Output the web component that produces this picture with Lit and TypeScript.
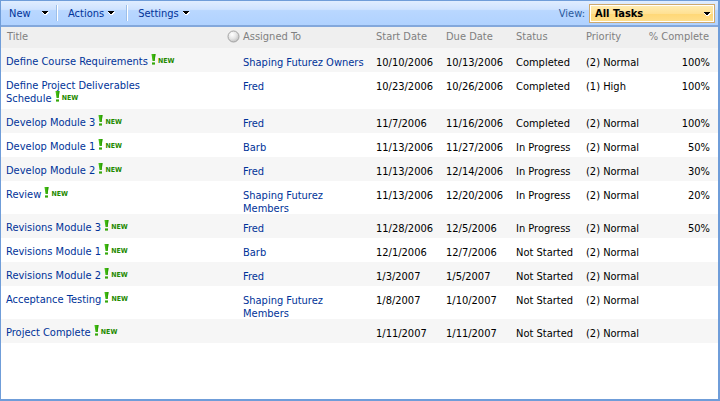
import { LitElement, html, css, svg } from "lit";
import { customElement } from "lit/decorators.js";

interface Task {
  title: string;
  assigned: string;
  start: string;
  due: string;
  status: string;
  priority: string;
  complete: string;
}

const task = (
  title: string, assigned: string, start: string, due: string,
  status: string, priority: string, complete: string,
): Task => ({ title, assigned, start, due, status, priority, complete });

const TASKS: Task[] = [
  task("Define Course Requirements", "Shaping Futurez Owners", "10/10/2006", "10/13/2006", "Completed", "(2) Normal", "100%"),
  task("Define Project Deliverables Schedule", "Fred", "10/23/2006", "10/26/2006", "Completed", "(1) High", "100%"),
  task("Develop Module 3", "Fred", "11/7/2006", "11/16/2006", "Completed", "(2) Normal", "100%"),
  task("Develop Module 1", "Barb", "11/13/2006", "11/27/2006", "In Progress", "(2) Normal", "50%"),
  task("Develop Module 2", "Fred", "11/13/2006", "12/14/2006", "In Progress", "(2) Normal", "30%"),
  task("Review", "Shaping Futurez Members", "11/13/2006", "12/20/2006", "In Progress", "(2) Normal", "20%"),
  task("Revisions Module 3", "Fred", "11/28/2006", "12/5/2006", "In Progress", "(2) Normal", "50%"),
  task("Revisions Module 1", "Barb", "12/1/2006", "12/7/2006", "Not Started", "(2) Normal", ""),
  task("Revisions Module 2", "Fred", "1/3/2007", "1/5/2007", "Not Started", "(2) Normal", ""),
  task("Acceptance Testing", "Shaping Futurez Members", "1/8/2007", "1/10/2007", "Not Started", "(2) Normal", ""),
  task("Project Complete", "", "1/11/2007", "1/11/2007", "Not Started", "(2) Normal", ""),
];

const arrowShape = svg`
  <path d="M0 1h7v1h-1v1h-1v1h-3v-1h-1v-1h-1z" fill="#fff" />
  <path d="M0 0h6v1h-1v1h-1v1h-2v-1h-1v-1h-1z" fill="#000" />`;

const arrow = html`<svg class="arrow" width="7" height="5" viewBox="0 0 7 5" shape-rendering="crispEdges" aria-hidden="true">${arrowShape}</svg>`;

const bang = html`<svg class="bang" width="5" height="11" viewBox="0 0 5 11" aria-hidden="true">
  <path d="M0.5 0h4l-.9 7h-2.1z" fill="#43bd12" />
  <path d="M2.6 0h1.9l-.9 7h-1z" fill="#2f9f08" />
  <path d="M1 8.4h3v2.2h-3z" fill="#36a80c" />
</svg>`;

const presence = html`<svg class="presence" width="13" height="13" viewBox="0 0 13 13" aria-hidden="true">
  <defs>
    <radialGradient id="ball" cx="0.38" cy="0.32" r="0.75">
      <stop offset="0" stop-color="#ffffff" />
      <stop offset="0.5" stop-color="#e6e6e6" />
      <stop offset="1" stop-color="#bcbcbc" />
    </radialGradient>
  </defs>
  <circle cx="6.5" cy="6.5" r="5.5" fill="url(#ball)" stroke="#a3a3a3" />
</svg>`;

@customElement("app-root")
export class AppRoot extends LitElement {
  static styles = css`
    :host {
      display: flex;
      flex-direction: column;
      box-sizing: border-box;
      min-height: 100vh;
      border: solid #6f9dd9;
      border-width: 1px 2px 2px 1px;
      background: #fff;
      color: #000;
      font: 11px/13px "DejaVu Sans Condensed", Tahoma, "DejaVu Sans", sans-serif;
    }
    .bar {
      display: flex;
      align-items: center;
      justify-content: space-between;
      box-sizing: border-box;
      height: 26px;
      padding-right: 3px;
      border-bottom: 2px solid #83a8dc;
      background: linear-gradient(#e0edff, #cfe3ff 35%, #b9d7ff 40%, #b0d2ff);
      color: #003399;
    }
    .menus {
      display: flex;
      align-items: center;
    }
    .menu {
      display: flex;
      align-items: center;
      justify-content: space-between;
      gap: 4px;
      height: 16px;
      padding: 0 12px 0 10px;
      border: 0;
      background: none;
      color: inherit;
      font: inherit;
    }
    .menu.new {
      width: 56px;
      padding: 0 8px;
    }
    .menu + .menu {
      border-left: 1px solid #fff;
      box-shadow: -1px 0 #9dbfe9;
    }
    .view {
      display: flex;
      align-items: center;
      gap: 4px;
      color: #2a5a9c;
    }
    .picker {
      position: relative;
      display: flex;
    }
    .picker select {
      appearance: none;
      box-sizing: border-box;
      width: 126px;
      height: 19px;
      padding: 0 20px 0 5px;
      border: 1px solid #cfa96d;
      border-radius: 0;
      outline: 1px solid #fff;
      outline-offset: -2px;
      background: linear-gradient(#ffedb5, #ffe194 50%, #ffd878 55%, #ffdf8c);
      color: #000;
      font: bold 11px/13px "DejaVu Sans Condensed", Tahoma, "DejaVu Sans", sans-serif;
    }
    .picker .arrow {
      position: absolute;
      top: 8px;
      right: 4px;
      pointer-events: none;
    }
    table {
      width: 100%;
      table-layout: fixed;
      border-collapse: collapse;
    }
    .c-assigned { width: 145px; }
    .c-field { width: 70px; }
    .c-priority { width: 64px; }
    .c-complete { width: 72px; }
    th {
      height: 21px;
      padding: 0 0 3px 4px;
      box-sizing: border-box;
      background: #efefef;
      color: #808080;
      font-weight: normal;
      text-align: left;
      white-space: nowrap;
    }
    th:first-child {
      padding-left: 6px;
    }
    th.assigned {
      padding-left: 0;
    }
    th.complete {
      padding: 0 9px 3px 0;
      text-align: right;
    }
    .who {
      display: flex;
      align-items: center;
      gap: 3px;
    }
    td {
      padding: 8px 0 0 4px;
      vertical-align: top;
    }
    tbody tr {
      height: 24px;
    }
    tbody tr:nth-child(odd) {
      background: #f6f6f6;
    }
    td.title {
      padding: 7px 40px 4px 5px;
    }
    td.assigned {
      padding: 8px 8px 0 16px;
    }
    td.assigned a {
      display: block;
      margin-bottom: -1px;
    }
    td.complete {
      padding-right: 8px;
      text-align: right;
    }
    a {
      color: #003399;
      text-decoration: none;
    }
    .flag {
      display: inline-flex;
      align-items: center;
      gap: 2px;
      height: 13px;
      color: #1f8a00;
      font-size: 7px;
      font-weight: bold;
      line-height: 9px;
      vertical-align: top;
    }
    .bang {
      margin-top: -4px;
    }
  `;

  private row(t: Task) {
    return html`<tr>
      <td class="title"><a href="#">${t.title}</a> <span class="flag">${bang}<span>NEW</span></span></td>
      <td class="assigned">${t.assigned ? html`<a href="#">${t.assigned}</a>` : ""}</td>
      <td>${t.start}</td>
      <td>${t.due}</td>
      <td>${t.status}</td>
      <td>${t.priority}</td>
      <td class="complete">${t.complete}</td>
    </tr>`;
  }

  render() {
    return html`
      <div class="bar">
        <div class="menus">
          <button class="menu new" type="button">New ${arrow}</button>
          <button class="menu" type="button">Actions ${arrow}</button>
          <button class="menu" type="button">Settings ${arrow}</button>
        </div>
        <div class="view">
          <label for="view">View:</label>
          <div class="picker">
            <select id="view"><option>All Tasks</option></select>
            ${arrow}
          </div>
        </div>
      </div>
      <table>
        <colgroup>
          <col />
          <col class="c-assigned" />
          <col class="c-field" span="3" />
          <col class="c-priority" />
          <col class="c-complete" />
        </colgroup>
        <thead>
          <tr>
            <th scope="col">Title</th>
            <th scope="col" class="assigned"><div class="who">${presence}Assigned To</div></th>
            <th scope="col">Start Date</th>
            <th scope="col">Due Date</th>
            <th scope="col">Status</th>
            <th scope="col">Priority</th>
            <th scope="col" class="complete">% Complete</th>
          </tr>
        </thead>
        <tbody>${TASKS.map((t) => this.row(t))}</tbody>
      </table>
    `;
  }
}
